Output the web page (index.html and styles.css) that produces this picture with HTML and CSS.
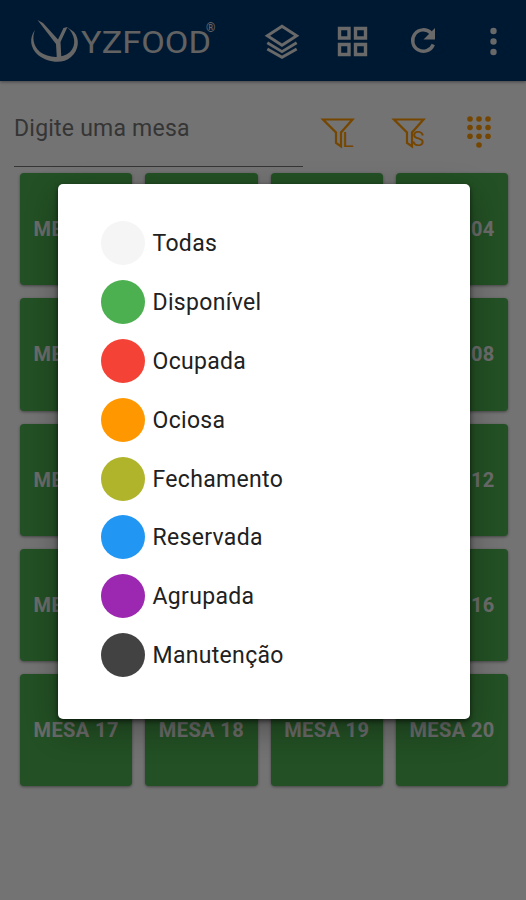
FILE: index.html
```html
<!DOCTYPE html>
<html lang="pt-BR">
<head>
<meta charset="utf-8">
<title>YZFOOD</title>
<link rel="stylesheet" href="styles.css">
</head>
<body>
<header class="appbar">
  <svg class="logo" width="190" height="48" viewBox="0 0 190 48">
    <path class="logo-fill" d="M7.5 3L13 6 28 22.5 33.5 11 37.5 10 30.5 25 31.5 44 27 44 26 27Z"/>
    <path class="logo-fill" d="M5 13C-1 21 0 31 8 38C17 45 32 48 41 40C49 33 50 22 44 15L37 10C45 17 47 28 40 35C32 42 18 41 10 35C3 29 2 20 5 13Z"/>
    <text class="logo-text" x="51" y="35.5" textLength="130" lengthAdjust="spacingAndGlyphs">YZFOOD</text>
    <text class="logo-mark" x="176" y="15">®</text>
  </svg>
  <nav class="actions">
    <svg class="icon" width="44" height="44" viewBox="0 0 24 24"><path d="M12 3.9L20 9.1 12 14.3 4 9.1ZM4 13L12 17.8 20 13M4 16.4L12 20.9 20 16.4"/></svg>
    <svg class="icon squares" width="44" height="44" viewBox="0 0 44 44"><path d="M9.5 9.5h9.5v9.5h-9.5zM25.5 9.5h10v9.5h-10zM9.5 25.5h9.5v10h-9.5zM25.5 25.5h10v10h-10z"/></svg>
    <svg class="icon refresh" width="44" height="44" viewBox="0 0 44 44"><path d="M30 14A10.7 10.7 0 1 0 32.3 25.5"/><path class="solid" d="M34 9V20.5H22.5Z"/></svg>
    <svg class="icon dots" width="44" height="44" viewBox="0 0 44 44"><circle cx="22.5" cy="12" r="3.2"/><circle cx="22.5" cy="22.5" r="3.2"/><circle cx="22.5" cy="33" r="3.2"/></svg>
  </nav>
</header>
<main>
  <div class="search">
    <div class="field">Digite uma mesa</div>
    <div class="filters">
      <svg width="36" height="36" viewBox="0 0 36 36"><path d="M3 4.5H32.5L21 17.5V31.5L16 28V17.5Z"/><text x="22.5" y="31.5">L</text></svg>
      <svg width="36" height="36" viewBox="0 0 36 36"><path d="M3 4.5H32.5L21 17.5V31.5L16 28V17.5Z"/><text x="21" y="31">S</text></svg>
      <svg class="pad" width="36" height="36" viewBox="0 0 36 36"><circle cx="9" cy="4" r="2.8"/><circle cx="18" cy="4" r="2.8"/><circle cx="27" cy="4" r="2.8"/><circle cx="9" cy="12.5" r="2.8"/><circle cx="18" cy="12.5" r="2.8"/><circle cx="27" cy="12.5" r="2.8"/><circle cx="9" cy="21.2" r="2.8"/><circle cx="18" cy="21.2" r="2.8"/><circle cx="27" cy="21.2" r="2.8"/><circle cx="18" cy="30" r="2.8"/></svg>
    </div>
  </div>
  <div class="tables">
    <div class="table">MESA 01</div><div class="table"></div><div class="table"></div><div class="table">MESA 04</div>
    <div class="table">MESA 05</div><div class="table"></div><div class="table"></div><div class="table">MESA 08</div>
    <div class="table">MESA 09</div><div class="table"></div><div class="table"></div><div class="table">MESA 12</div>
    <div class="table">MESA 13</div><div class="table"></div><div class="table"></div><div class="table">MESA 16</div>
    <div class="table">MESA 17</div><div class="table">MESA 18</div><div class="table">MESA 19</div><div class="table">MESA 20</div>
  </div>
</main>
<div class="overlay">
  <ul class="dialog">
    <li><span class="dot all"></span><span class="label">Todas</span></li>
    <li><span class="dot free"></span><span class="label">Disponível</span></li>
    <li><span class="dot busy"></span><span class="label">Ocupada</span></li>
    <li><span class="dot idle"></span><span class="label">Ociosa</span></li>
    <li><span class="dot closing"></span><span class="label">Fechamento</span></li>
    <li><span class="dot reserved"></span><span class="label">Reservada</span></li>
    <li><span class="dot grouped"></span><span class="label">Agrupada</span></li>
    <li><span class="dot maintenance"></span><span class="label">Manutenção</span></li>
  </ul>
</div>
</body>
</html>
```
FILE: styles.css
```css
* { box-sizing: border-box; }
body {
  margin: 0;
  height: 900px;
  overflow: hidden;
  background: #fafafa;
  font-family: Roboto, "Liberation Sans", sans-serif;
}
.appbar {
  height: 81px;
  padding: 0 11px 0 30px;
  display: flex;
  align-items: center;
  justify-content: space-between;
  background: #00376d;
  box-shadow: 0 1px 3px rgba(0, 0, 0, .4);
}
.logo { overflow: visible; }
.logo-fill { fill: #dedede; }
.logo-text { font-size: 32px; font-weight: 400; fill: #d6d6d6; }
.logo-mark { font-size: 12px; font-weight: 700; fill: #dedede; }
.actions { display: flex; gap: 26.5px; }
.icon { fill: none; stroke: #e4e4e4; stroke-width: 1.6; }
.squares, .refresh { stroke-width: 3.4; }
.refresh .solid, .dots { fill: #e4e4e4; stroke: none; }
.search {
  height: 86px;
  padding: 0 29px 0 14px;
  display: flex;
  justify-content: space-between;
}
.field {
  width: 289px;
  padding-top: 34px;
  border-bottom: 1px solid #757575;
  color: #757575;
  font-size: 23px;
  line-height: 28px;
  letter-spacing: .22px;
}
.filters { display: flex; gap: 34.5px; padding-top: 34px; }
.filters svg { fill: none; stroke: #ff9800; stroke-width: 2.2; }
.filters text { font-size: 21px; fill: #ff9800; stroke: none; }
.filters .pad { fill: #ff9800; stroke: none; }
.tables {
  display: grid;
  grid-template-columns: repeat(4, 112.3px);
  grid-auto-rows: 112.3px;
  gap: 13px;
  padding: 6px 0 0 20px;
}
.table {
  display: flex;
  align-items: center;
  justify-content: center;
  border-radius: 4px;
  background: #4caf50;
  box-shadow: 0 1px 3px rgba(0, 0, 0, .4);
  color: #eaeaea;
  font-size: 20px;
  font-weight: 700;
  letter-spacing: .4px;
}
.overlay {
  position: absolute;
  inset: 0;
  display: flex;
  align-items: flex-start;
  padding: 184px 0 0 58px;
  background: rgba(0, 0, 0, .54);
}
.dialog {
  width: 412px;
  height: 535px;
  margin: 0;
  padding: 37px 43px;
  list-style: none;
  border-radius: 5px;
  background: #fff;
  box-shadow: 0 11px 32px rgba(0, 0, 0, .3), 0 2px 5px rgba(0, 0, 0, .6);
  display: flex;
  flex-direction: column;
  gap: 14.9px;
}
.dialog li {
  height: 44px;
  display: flex;
  align-items: center;
  gap: 7.5px;
  color: #212121;
  font-size: 23px;
  line-height: 28px;
  letter-spacing: .32px;
}
.label { padding-top: 2px; }
.dot { width: 44px; height: 44px; border-radius: 50%; }
.all { background: #f5f5f5; }
.free { background: #4caf50; }
.busy { background: #f44336; }
.idle { background: #ff9800; }
.closing { background: #afb42b; }
.reserved { background: #2196f3; }
.grouped { background: #9c27b0; }
.maintenance { background: #424242; }
```
